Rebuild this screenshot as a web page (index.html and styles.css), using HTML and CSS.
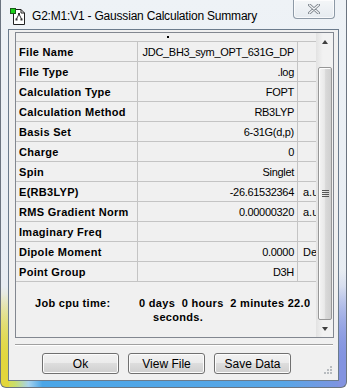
FILE: index.html
```html
<!DOCTYPE html>
<html lang="en">
<head>
    <meta charset="UTF-8">
    <title>G2:M1:V1 - Gaussian Calculation Summary</title>
    <link rel="stylesheet" href="styles.css">
</head>
<body>
    <div class="window">
        <div class="titlebar">
            <svg class="app-icon" width="16" height="17" viewBox="0 0 16 17">
                <path d="M3.5 1.5 H11 L14.5 5 V16.5 H3.5 Z" fill="#fff" stroke="#222"/>
                <path d="M11 1.5 V5 H14.5" fill="none" stroke="#222"/>
                <line x1="9" y1="6" x2="6.5" y2="11" stroke="#333"/>
                <line x1="9" y1="6" x2="11.5" y2="11" stroke="#333"/>
                <rect x="8" y="5" width="2" height="2" fill="#333"/>
                <rect x="5.5" y="10.5" width="2" height="2" fill="#333"/>
                <rect x="10.5" y="10.5" width="2" height="2" fill="#333"/>
                <rect x="0.5" y="0.5" width="5" height="5" fill="#19d219" stroke="#1a5a1a"/>
            </svg>
            <span class="title">G2:M1:V1 - Gaussian Calculation Summary</span>
            <div class="close-btn">
                <svg width="12" height="10" viewBox="0 0 12 10">
                    <path d="M1.5 1 L10.5 9 M10.5 1 L1.5 9" stroke="#7d848c" stroke-width="3" stroke-linecap="round"/>
                    <path d="M1.5 1 L10.5 9 M10.5 1 L1.5 9" stroke="#f4f6f8" stroke-width="1.2" stroke-linecap="round"/>
                </svg>
            </div>
        </div>

        <div class="client">
            <div class="panel">
                <div class="scroll-view">
                    <div class="top-gap"><span class="dot"></span></div>
                    <table class="summary">
                        <tr><td class="label">File Name</td><td class="value">JDC_BH3_sym_OPT_631G_DP</td><td class="unit"></td></tr>
                        <tr><td class="label">File Type</td><td class="value">.log</td><td class="unit"></td></tr>
                        <tr><td class="label">Calculation Type</td><td class="value">FOPT</td><td class="unit"></td></tr>
                        <tr><td class="label">Calculation Method</td><td class="value">RB3LYP</td><td class="unit"></td></tr>
                        <tr><td class="label">Basis Set</td><td class="value">6-31G(d,p)</td><td class="unit"></td></tr>
                        <tr><td class="label">Charge</td><td class="value">0</td><td class="unit"></td></tr>
                        <tr><td class="label">Spin</td><td class="value">Singlet</td><td class="unit"></td></tr>
                        <tr><td class="label">E(RB3LYP)</td><td class="value">-26.61532364</td><td class="unit">a.u.</td></tr>
                        <tr><td class="label">RMS Gradient Norm</td><td class="value">0.00000320</td><td class="unit">a.u.</td></tr>
                        <tr><td class="label">Imaginary Freq</td><td class="value"></td><td class="unit"></td></tr>
                        <tr><td class="label">Dipole Moment</td><td class="value">0.0000</td><td class="unit">Debye</td></tr>
                        <tr><td class="label">Point Group</td><td class="value">D3H</td><td class="unit"></td></tr>
                    </table>
                    <div class="cpu">
                        <div class="cpu-label">Job cpu time:</div>
                        <div class="cpu-value">
                            <div class="cpu-line">0 days&nbsp; 0 hours&nbsp; 2 minutes 22.0</div>
                            <div class="cpu-line cpu-end">seconds.</div>
                        </div>
                    </div>
                </div>
                <div class="scrollbar">
                    <div class="sb-btn"><span class="arrow-up"></span></div>
                    <div class="sb-track">
                        <div class="sb-thumb">
                            <div class="sb-grip"><i></i><i></i><i></i><i></i></div>
                        </div>
                    </div>
                    <div class="sb-btn"><span class="arrow-down"></span></div>
                </div>
            </div>

            <div class="separator"></div>

            <div class="buttons">
                <button>Ok</button>
                <button>View File</button>
                <button>Save Data</button>
            </div>

            <svg class="size-grip" width="9" height="9" viewBox="0 0 9 9">
                <rect x="6" y="0" width="2" height="2" fill="#b8bcc0"/>
                <rect x="3" y="3" width="2" height="2" fill="#b8bcc0"/>
                <rect x="6" y="3" width="2" height="2" fill="#b8bcc0"/>
                <rect x="0" y="6" width="2" height="2" fill="#b8bcc0"/>
                <rect x="3" y="6" width="2" height="2" fill="#b8bcc0"/>
                <rect x="6" y="6" width="2" height="2" fill="#b8bcc0"/>
            </svg>
        </div>
    </div>
</body>
</html>
```

FILE: styles.css
```css
body {
    margin: 0;
    background: #ffffff;
    font-family: "Liberation Sans", Arial, sans-serif;
}
.window {
    box-sizing: border-box;
    width: 347px;
    height: 388px;
    display: flex;
    flex-direction: column;
    border: 1px solid #6b7480;
    border-top: none;
    border-radius: 0 0 6px 6px;
    background:
        linear-gradient(180deg, rgba(224, 214, 64, 0) 76%, #e2d63c 96%) left top / 8px 100% no-repeat,
        linear-gradient(180deg, rgba(128, 144, 224, 0) 70%, #8393e0 96%) right top / 8px 100% no-repeat,
        linear-gradient(180deg, #eef2f6 0%, #e7ecf2 74%, rgba(231, 236, 242, 0) 93%),
        linear-gradient(90deg, #e6d83a 0%, #c8de6c 4%, #a6d3ee 8%, #4aa6e8 12%, #58a6e6 82%, #8292e0 100%);
}
.titlebar {
    height: 29px;
    display: flex;
    align-items: flex-start;
    flex-shrink: 0;
}
.app-icon {
    margin: 8px 0 0 9px;
}
.title {
    margin: 9px 0 0 6px;
    font-size: 12px;
    line-height: 15px;
    letter-spacing: -0.2px;
    color: #000;
}
.close-btn {
    box-sizing: border-box;
    width: 42px;
    height: 19px;
    margin: 0 11px 0 auto;
    display: flex;
    align-items: center;
    justify-content: center;
    border: 1px solid #8d99a6;
    border-top: none;
    border-radius: 0 0 4px 4px;
    background: linear-gradient(180deg, #f4f6f8, #e6ebf0);
    box-shadow: inset 0 0 0 1px rgba(255, 255, 255, 0.7);
}
.client {
    position: relative;
    flex: 1;
    margin: 0 7px 6px 7px;
    padding: 2px 4px 0 6px;
    border: 1px solid #6b7b8c;
    background: #f0f0f0;
}

/* scrolled summary panel */
.panel {
    height: 306px;
    box-sizing: border-box;
    display: flex;
    border: 1px solid #828790;
    background: #f0f0f0;
}
.scroll-view {
    width: 300px;
    overflow: hidden;
}
.top-gap {
    height: 8px;
    border-bottom: 1px solid #c4c4c4;
}
.dot {
    display: inline-block;
    width: 2px;
    height: 2px;
    margin: 3px 0 0 151px;
    background: #000;
    vertical-align: top;
}
.summary {
    border-collapse: collapse;
    table-layout: fixed;
    width: 300px;
}
.summary td {
    height: 19px;
    padding: 0;
    border-bottom: 1px solid #c4c4c4;
    font-size: 11px;
    color: #000;
    white-space: nowrap;
    overflow: hidden;
}
.summary .label {
    width: 118px;
    padding-left: 3px;
    border-right: 1px solid #c4c4c4;
    font-weight: bold;
    letter-spacing: 0.3px;
}
.summary .value {
    width: 156px;
    padding-right: 3px;
    border-right: 1px solid #c4c4c4;
    text-align: right;
    letter-spacing: -0.3px;
}
.summary .unit {
    padding-left: 5px;
    text-overflow: clip;
}
.cpu {
    display: flex;
    padding: 14px 0 0 19px;
    font-size: 11px;
    font-weight: bold;
    line-height: 14px;
    letter-spacing: 0.3px;
}
.cpu-label {
    width: 104px;
    flex-shrink: 0;
}
.cpu-value {
    overflow: hidden;
}
.cpu-line {
    white-space: nowrap;
}
.cpu-end {
    padding-left: 14px;
}

/* vertical scrollbar */
.scrollbar {
    width: 17px;
    display: flex;
    flex-direction: column;
    background: linear-gradient(90deg, #e2e2e2, #f2f2f2 40%, #f2f2f2);
}
.sb-btn {
    height: 17px;
    display: flex;
    align-items: center;
    justify-content: center;
}
.arrow-up, .arrow-down {
    width: 0;
    height: 0;
    border-left: 3.5px solid transparent;
    border-right: 3.5px solid transparent;
}
.arrow-up {
    border-bottom: 4px solid #404040;
}
.arrow-down {
    border-top: 4px solid #404040;
}
.sb-track {
    flex: 1;
    display: flex;
    padding: 17px 0 0 2px;
}
.sb-thumb {
    box-sizing: border-box;
    width: 14px;
    display: flex;
    align-items: center;
    justify-content: center;
    border: 1px solid #979797;
    border-radius: 2px;
    background: linear-gradient(90deg, #f4f4f4, #e9e9e9 45%, #d9d9d9 55%, #cfcfcf);
    box-shadow: inset 1px 1px 0 #fdfdfd;
}
.sb-grip i {
    display: block;
    width: 7px;
    height: 1px;
    margin-bottom: 1px;
    background: #555;
}

.separator {
    height: 0;
    margin-top: 6px;
    margin-right: 1px;
    border-top: 1px solid #a0a0a0;
    border-bottom: 1px solid #ffffff;
}
.buttons {
    display: flex;
    gap: 9px;
    margin: 7px 0 0 27px;
}
button {
    box-sizing: border-box;
    width: 77px;
    height: 21px;
    padding: 0;
    border: 1px solid #707070;
    border-radius: 3px;
    background: linear-gradient(180deg, #f2f2f2 0%, #ebebeb 49%, #dddddd 50%, #cfcfcf 100%);
    box-shadow: inset 0 0 0 1px #fcfcfc;
    font-family: "Liberation Sans", Arial, sans-serif;
    font-size: 12px;
    color: #000;
}
.size-grip {
    position: absolute;
    right: 5px;
    bottom: 5px;
}
```
